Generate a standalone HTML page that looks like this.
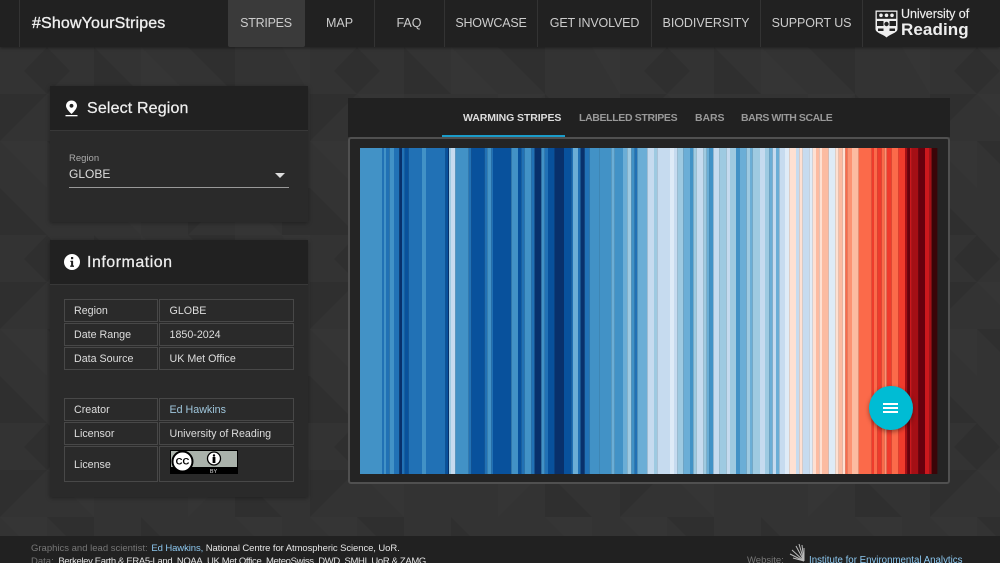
<!DOCTYPE html>
<html><head><meta charset="utf-8"><title>#ShowYourStripes</title>
<style>
html,body{margin:0;padding:0;background:#333;width:1000px;height:563px;overflow:hidden}
#w{width:1000px;height:563px;overflow:hidden;position:relative;font-family:"Liberation Sans",sans-serif;color:#ddd}
.a{position:absolute;white-space:nowrap}
.hd{left:0;top:0;width:1000px;height:47px;background:#212121;box-shadow:0 1px 3px rgba(0,0,0,.4)}
.dv{top:0;width:1px;height:47px;background:#333}
.nav{top:15px;font-size:12.5px;line-height:17px;color:#ccc;text-align:center}
.panel{left:50px;width:258px;background:#2a2a2a;box-shadow:0 1px 4px rgba(0,0,0,.35)}
.ph{left:0;top:0;width:258px;height:44px;background:#212121;border-bottom:1px solid #383838}
.pt{font-size:16px;line-height:20px;color:#eee;-webkit-text-stroke:.25px #eee;letter-spacing:.15px}
.c{box-sizing:border-box;border:1px solid #484848;font-size:10.7px;color:#ddd;padding-left:9px;display:flex;align-items:center}
.k{left:64px;width:94px}.v{left:159px;width:135px;padding-left:9.5px}
.tab{top:111px;font-size:10.5px;line-height:14px;font-weight:bold;color:#999}
.ft{font-size:9.5px;line-height:12px;color:#777}
.ft b{font-weight:normal;color:#e4e4e4}.ft i{font-style:normal;color:#8cc8f0}
</style></head><body><div id="w">
<svg class="a" style="left:0;top:0" width="1000" height="563">
<defs><pattern id="q" width="310" height="188" patternUnits="userSpaceOnUse" x="0" y="47">
<rect width="310" height="188" fill="#333"/>
<g fill="#2f2f2f">
<polygon points="0,47 47,47 0,94"/><polygon points="94,0 141,47 94,47"/><polygon points="188,0 235,0 235,47"/><polygon points="47,94 94,94 94,141"/><polygon points="141,94 188,141 141,141"/><polygon points="235,47 282,94 235,94"/><polygon points="282,141 310,141 310,188 282,188"/><polygon points="0,141 47,188 0,188"/><polygon points="188,141 235,141 188,188"/><polygon points="47,0 70,24 47,47 24,24"/>
</g>
<g fill="#353535">
<polygon points="47,47 94,47 94,94"/><polygon points="141,0 188,47 141,47"/><polygon points="235,94 282,94 282,141"/><polygon points="94,141 141,141 141,188"/><polygon points="188,47 235,47 188,94"/><polygon points="0,94 47,94 47,141"/><polygon points="235,141 282,188 235,188"/><polygon points="282,0 310,0 310,47"/>
</g></pattern></defs>
<rect y="47" width="1000" height="489" fill="url(#q)"/></svg>

<div class="a hd"></div>
<div class="a dv" style="left:19px"></div>
<div class="a" style="left:228px;top:0;width:77px;height:47px;background:#3a3a3a;border-radius:0 0 2px 2px"></div>
<div class="a dv" style="left:374px"></div><div class="a dv" style="left:444px"></div><div class="a dv" style="left:537px"></div><div class="a dv" style="left:651px"></div><div class="a dv" style="left:760px"></div><div class="a dv" style="left:862px"></div>
<div class="a" style="left:32px;top:14px;font-size:16px;line-height:20px;color:#eee;-webkit-text-stroke:.35px #eee;letter-spacing:.15px">#ShowYourStripes</div>
<div class="a nav" style="left:228px;width:76px;letter-spacing:-.25px">STRIPES</div>
<div class="a nav" style="left:305px;width:69px">MAP</div>
<div class="a nav" style="left:374px;width:70px">FAQ</div>
<div class="a nav" style="left:445px;width:92px;letter-spacing:-.2px">SHOWCASE</div>
<div class="a nav" style="left:538px;width:113px;letter-spacing:-.15px">GET INVOLVED</div>
<div class="a nav" style="left:652px;width:108px;letter-spacing:-.05px">BIODIVERSITY</div>
<div class="a nav" style="left:761px;width:101px;letter-spacing:-.1px">SUPPORT US</div>

<svg class="a" style="left:875px;top:10px" width="23" height="28" viewBox="0 0 23 28">
<path d="M0.500 0.500H22.500V19C22.500 23 15 24 11.500 27.500C8 24 0.500 23 0.500 19Z" fill="#eee"/>
<rect x="1.800" y="1.800" width="19.400" height="7" fill="#212121"/>
<circle cx="6" cy="5.300" r="1.800" fill="#eee"/><circle cx="11.500" cy="5.300" r="1.800" fill="#eee"/><circle cx="17" cy="5.300" r="1.800" fill="#eee"/>
<rect x="2" y="11" width="6.500" height="5" fill="#212121"/><rect x="14.500" y="11" width="6.500" height="5" fill="#212121"/>
<rect x="3" y="18.500" width="5.500" height="2.500" fill="#212121"/><rect x="14.500" y="18.500" width="5.500" height="2.500" fill="#212121"/>
<circle cx="11.500" cy="14" r="2.200" fill="#212121"/></svg>
<div class="a" style="left:901px;top:7px;font-size:12.5px;line-height:15px;color:#eee;letter-spacing:-.05px;-webkit-text-stroke:.15px #eee">University of</div>
<div class="a" style="left:901px;top:18px;font-size:17px;line-height:24px;font-weight:bold;color:#eee;letter-spacing:.1px">Reading</div>

<div class="a panel" style="top:86px;height:136px">
<div class="a ph"></div>
<svg class="a" style="left:15px;top:14px" width="13" height="17" viewBox="0 0 13 17"><path d="M6.500 0.500C3.400 0.500 1 2.900 1 5.800C1 9.300 6.500 14 6.500 14S12 9.300 12 5.800C12 2.900 9.600 0.500 6.500 0.500Z" fill="#fff"/><circle cx="6.500" cy="5.800" r="1.900" fill="#212121"/><rect x="0.500" y="15" width="12" height="1.300" fill="#fff"/></svg>
<div class="a pt" style="left:37px;top:13px">Select Region</div>
<div class="a" style="left:19px;top:67px;font-size:9.500px;line-height:12px;color:#aaa">Region</div>
<div class="a" style="left:19px;top:80px;font-size:12px;line-height:16px;color:#ddd">GLOBE</div>
<div class="a" style="left:19px;top:101px;width:220px;height:1px;background:#999"></div>
<div class="a" style="left:225px;top:87px;width:0;height:0;border-left:5px solid transparent;border-right:5px solid transparent;border-top:5px solid #ddd"></div>
</div>

<div class="a panel" style="top:240px;height:257px">
<div class="a ph"></div>
<svg class="a" style="left:14px;top:14px" width="16" height="16" viewBox="0 0 16 16"><circle cx="8" cy="8" r="8" fill="#fff"/><rect x="7" y="3" width="2.200" height="2.200" fill="#212121"/><path d="M6.400 6.700H9.100V11.500H10V12.900H6.200V11.500H7.100V8H6.400Z" fill="#212121"/></svg>
<div class="a pt" style="left:37px;top:13px;letter-spacing:.5px">Information</div>
</div>
<div class="a c k" style="top:299px;height:23px">Region</div><div class="a c v" style="top:299px;height:23px">GLOBE</div>
<div class="a c k" style="top:323px;height:23px">Date Range</div><div class="a c v" style="top:323px;height:23px">1850-2024</div>
<div class="a c k" style="top:347px;height:23px">Data Source</div><div class="a c v" style="top:347px;height:23px">UK Met Office</div>
<div class="a c k" style="top:398px;height:23px">Creator</div><div class="a c v" style="top:398px;height:23px;color:#9fc6dc">Ed Hawkins</div>
<div class="a c k" style="top:422px;height:23px">Licensor</div><div class="a c v" style="top:422px;height:23px">University of Reading</div>
<div class="a c k" style="top:446px;height:36px;padding-top:1px">License</div><div class="a c v" style="top:446px;height:36px"></div>
<svg class="a" style="left:170px;top:450px" width="68" height="24" viewBox="0 0 68 24">
<rect width="68" height="24" fill="#000"/><rect x="1" y="1" width="66" height="16" fill="#aab2ab"/>
<circle cx="12.500" cy="11.500" r="10" fill="#fff" stroke="#000" stroke-width="2"/>
<text x="12.500" y="14.500" text-anchor="middle" font-family="Liberation Sans" font-weight="bold" font-size="9.500" fill="#000">CC</text>
<circle cx="44" cy="8.500" r="6.500" fill="#fff" stroke="#000" stroke-width="1.300"/><circle cx="44" cy="5.500" r="1.200" fill="#000"/><rect x="42.600" y="7" width="2.800" height="6" fill="#000"/>
<text x="43.500" y="23" text-anchor="middle" font-family="Liberation Sans" font-size="5.500" fill="#ddd">BY</text></svg>

<div class="a" style="left:348px;top:98px;width:602px;height:39px;background:#212121"></div>
<div class="a tab" style="left:463px;color:#ddd;letter-spacing:-.1px">WARMING STRIPES</div>
<div class="a tab" style="left:579px;letter-spacing:-.35px">LABELLED STRIPES</div>
<div class="a tab" style="left:695px;letter-spacing:-.1px">BARS</div>
<div class="a tab" style="left:741px;letter-spacing:-.45px">BARS WITH SCALE</div>
<div class="a" style="left:348px;top:137px;width:602px;height:347px;box-sizing:border-box;background:#242424;border:2px solid #505050;border-radius:3px"></div>
<div class="a" style="left:442px;top:135px;width:123px;height:2px;background:#1b9cc9"></div>

<svg class="a" style="left:358px;top:148px" width="292" height="326" viewBox="0 0 876 1" preserveAspectRatio="none"><g id="s1">
<rect x="6" width="66" height="1" fill="#4292c6"/><rect x="72" width="6" height="1" fill="#2171b5"/><rect x="78" width="6" height="1" fill="#4292c6"/><rect x="84" width="11" height="1" fill="#2171b5"/><rect x="95" width="13" height="1" fill="#4292c6"/><rect x="108" width="16" height="1" fill="#2171b5"/><rect x="124" width="8" height="1" fill="#08306b"/><rect x="132" width="8" height="1" fill="#2171b5"/><rect x="140" width="12" height="1" fill="#08519c"/><rect x="152" width="40" height="1" fill="#2171b5"/><rect x="192" width="12" height="1" fill="#4292c6"/><rect x="204" width="58" height="1" fill="#2171b5"/><rect x="262" width="8" height="1" fill="#08519c"/><rect x="270" width="3" height="1" fill="#08306b"/><rect x="273" width="6" height="1" fill="#9ecae1"/><rect x="279" width="13" height="1" fill="#c6dbef"/><rect x="292" width="40" height="1" fill="#4292c6"/><rect x="332" width="8" height="1" fill="#2171b5"/><rect x="340" width="40" height="1" fill="#08519c"/><rect x="380" width="8" height="1" fill="#2171b5"/><rect x="388" width="12" height="1" fill="#4292c6"/><rect x="400" width="5" height="1" fill="#2171b5"/><rect x="405" width="55" height="1" fill="#08519c"/><rect x="460" width="20" height="1" fill="#4292c6"/><rect x="480" width="10" height="1" fill="#08519c"/><rect x="490" width="10" height="1" fill="#2171b5"/><rect x="500" width="20" height="1" fill="#4292c6"/><rect x="520" width="10" height="1" fill="#2171b5"/><rect x="530" width="20" height="1" fill="#08306b"/><rect x="550" width="10" height="1" fill="#4292c6"/><rect x="560" width="10" height="1" fill="#2171b5"/><rect x="570" width="20" height="1" fill="#08519c"/><rect x="590" width="28" height="1" fill="#08306b"/><rect x="618" width="22" height="1" fill="#08519c"/><rect x="640" width="5" height="1" fill="#2171b5"/><rect x="645" width="15" height="1" fill="#6baed6"/><rect x="660" width="8" height="1" fill="#2171b5"/><rect x="668" width="12" height="1" fill="#08306b"/><rect x="680" width="15" height="1" fill="#2171b5"/><rect x="695" width="30" height="1" fill="#4292c6"/><rect x="725" width="35" height="1" fill="#4292c6"/><rect x="760" width="10" height="1" fill="#6baed6"/><rect x="770" width="25" height="1" fill="#4292c6"/><rect x="795" width="13" height="1" fill="#6baed6"/><rect x="808" width="12" height="1" fill="#9ecae1"/><rect x="820" width="10" height="1" fill="#4292c6"/><rect x="830" width="8" height="1" fill="#2171b5"/><rect x="838" width="30" height="1" fill="#6baed6"/><rect x="868" width="8" height="1" fill="#c6dbef"/></g></svg>
<svg class="a" style="left:650px;top:148px" width="292" height="326" viewBox="0 0 876 1" preserveAspectRatio="none">
<rect x="0" width="12" height="1" fill="#c6dbef"/><rect x="12" width="10" height="1" fill="#9ecae1"/><rect x="22" width="38" height="1" fill="#c6dbef"/><rect x="60" width="12" height="1" fill="#deebf7"/><rect x="72" width="10" height="1" fill="#c6dbef"/><rect x="82" width="18" height="1" fill="#9ecae1"/><rect x="100" width="20" height="1" fill="#6baed6"/><rect x="120" width="10" height="1" fill="#4292c6"/><rect x="130" width="10" height="1" fill="#9ecae1"/><rect x="140" width="20" height="1" fill="#c6dbef"/><rect x="160" width="10" height="1" fill="#9ecae1"/><rect x="170" width="8" height="1" fill="#6baed6"/><rect x="178" width="12" height="1" fill="#4292c6"/><rect x="190" width="18" height="1" fill="#c6dbef"/><rect x="208" width="22" height="1" fill="#9ecae1"/><rect x="230" width="10" height="1" fill="#c6dbef"/><rect x="240" width="18" height="1" fill="#9ecae1"/><rect x="258" width="12" height="1" fill="#4292c6"/><rect x="270" width="20" height="1" fill="#6baed6"/><rect x="290" width="10" height="1" fill="#9ecae1"/><rect x="300" width="8" height="1" fill="#6baed6"/><rect x="308" width="22" height="1" fill="#9ecae1"/><rect x="330" width="15" height="1" fill="#c6dbef"/><rect x="345" width="13" height="1" fill="#9ecae1"/><rect x="358" width="10" height="1" fill="#6baed6"/><rect x="368" width="10" height="1" fill="#c6dbef"/><rect x="378" width="10" height="1" fill="#6baed6"/><rect x="388" width="17" height="1" fill="#c6dbef"/><rect x="405" width="13" height="1" fill="#deebf7"/><rect x="418" width="20" height="1" fill="#fee0d2"/><rect x="438" width="10" height="1" fill="#c6dbef"/><rect x="448" width="10" height="1" fill="#fee0d2"/><rect x="458" width="20" height="1" fill="#c6dbef"/><rect x="478" width="10" height="1" fill="#deebf7"/><rect x="488" width="10" height="1" fill="#fee0d2"/><rect x="498" width="10" height="1" fill="#fcbba1"/><rect x="508" width="8" height="1" fill="#fee0d2"/><rect x="516" width="20" height="1" fill="#fcbba1"/><rect x="536" width="20" height="1" fill="#deebf7"/><rect x="556" width="10" height="1" fill="#fee0d2"/><rect x="566" width="12" height="1" fill="#fcbba1"/><rect x="578" width="8" height="1" fill="#fee0d2"/><rect x="586" width="6" height="1" fill="#fb6a4a"/><rect x="592" width="14" height="1" fill="#fc9272"/><rect x="606" width="20" height="1" fill="#fcbba1"/><rect x="626" width="39" height="1" fill="#fb6a4a"/><rect x="665" width="7" height="1" fill="#ef3b2c"/><rect x="672" width="10" height="1" fill="#fb6a4a"/><rect x="682" width="13" height="1" fill="#ef3b2c"/><rect x="695" width="9" height="1" fill="#fb6a4a"/><rect x="704" width="6" height="1" fill="#fc9272"/><rect x="710" width="15" height="1" fill="#ef3b2c"/><rect x="725" width="20" height="1" fill="#fb6a4a"/><rect x="745" width="20" height="1" fill="#ef3b2c"/><rect x="765" width="7" height="1" fill="#a50f15"/><rect x="772" width="8" height="1" fill="#67000d"/><rect x="780" width="5" height="1" fill="#cb181d"/><rect x="785" width="20" height="1" fill="#a50f15"/><rect x="805" width="20" height="1" fill="#67000d"/><rect x="825" width="13" height="1" fill="#cb181d"/><rect x="838" width="7" height="1" fill="#a50f15"/><rect x="845" width="17" height="1" fill="#3a0508"/></svg>

<div class="a" style="left:869px;top:386px;width:44px;height:44px;border-radius:50%;background:#00bcd4;box-shadow:0 2px 5px rgba(0,0,0,.4)"></div>
<div class="a" style="left:883px;top:403px;width:15px;height:2px;background:#fff"></div>
<div class="a" style="left:883px;top:407px;width:15px;height:2px;background:#fff"></div>
<div class="a" style="left:883px;top:411px;width:15px;height:2px;background:#fff"></div>

<div class="a" style="left:0;top:536px;width:1000px;height:27px;background:#212121"></div>
<div class="a ft" style="left:31px;top:543px">Graphics and lead scientist: <span style="margin-left:1px;letter-spacing:-.09px"><i>Ed Hawkins,</i> <b>National Centre for Atmospheric Science, UoR.</b></span></div>
<div class="a ft" style="left:31px;top:556px">Data: <span style="letter-spacing:-.35px;margin-left:2px"><b>Berkeley Earth &amp; ERA5-Land, NOAA, UK Met Office, MeteoSwiss, DWD, SMHI, UoR &amp; ZAMG</b></span></div>
<div class="a ft" style="left:747px;top:555px">Website:</div>
<svg class="a" style="left:789px;top:543px" width="18" height="20" viewBox="0 0 18 20"><g stroke="#bbb" stroke-width="1" fill="none"><path d="M15 18L1 11"/><path d="M15 18L3 7"/><path d="M15 18L7 3"/><path d="M15 18L10 1"/><path d="M15 18L13 2"/><path d="M15 18L4 15"/><path d="M15 18L15 5"/></g></svg>
<div class="a ft" style="left:809px;top:555px;color:#8cc8f0;font-size:9.7px">Institute for Environmental Analytics</div>
</div></body></html>
